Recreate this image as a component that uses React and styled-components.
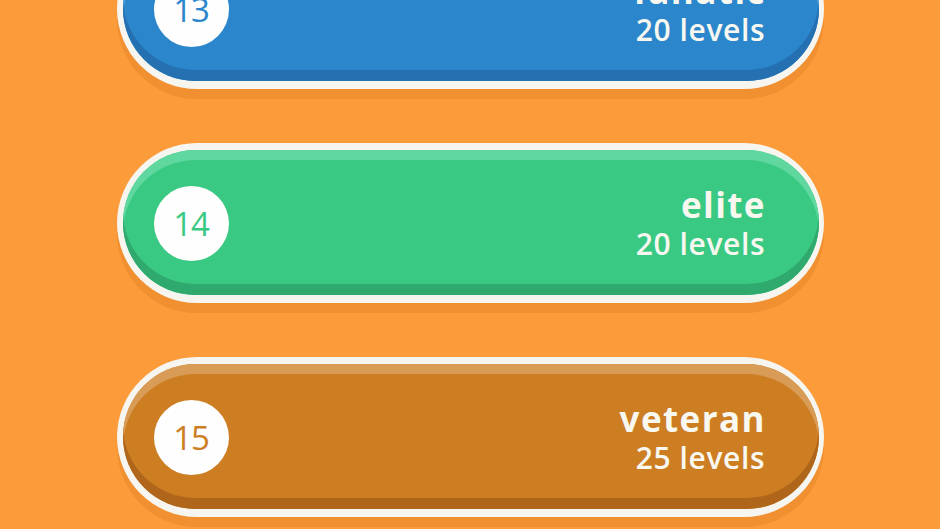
import React from 'react';
import styled, { createGlobalStyle } from 'styled-components';

const GlobalStyle = createGlobalStyle`
  html, body {
    margin: 0;
    padding: 0;
    background: #fc9b3a;
    overflow: hidden;
  }
  body {
    font-family: 'Open Sans', 'Liberation Sans', sans-serif;
  }
`;

const packs = [
  { id: 13, name: 'fanatic', levels: 20, tone: 'blue' },
  { id: 14, name: 'elite', levels: 20, tone: 'green' },
  { id: 15, name: 'veteran', levels: 25, tone: 'amber' }
];

const tones = {
  blue: { main: '#2b86cb', dark: '#2470b0', light: '#4a9ad6' },
  green: { main: '#3ac983', dark: '#2fa96d', light: '#60d79f' },
  amber: { main: '#cd7d22', dark: '#b0661a', light: '#d89c57' }
};

function App() {
  return (
    <>
      <GlobalStyle />
      <Screen>
        <PackList>
          {packs.map((pack) => (
            <PackCard key={pack.id}>
              <PackFace $tone={tones[pack.tone]}>
                <NumberBadge $color={tones[pack.tone].main}>{pack.id}</NumberBadge>
                <PackInfo>
                  <PackName>{pack.name}</PackName>
                  <PackLevels>{pack.levels} levels</PackLevels>
                </PackInfo>
              </PackFace>
            </PackCard>
          ))}
        </PackList>
      </Screen>
    </>
  );
}

export default App;

const Screen = styled.div`
  width: 940px;
  height: 529px;
  background: #fc9b3a;
  overflow: hidden;
  display: flex;
  justify-content: center;
`;

const PackList = styled.div`
  width: 707px;
  margin-top: -71px;
  display: flex;
  flex-direction: column;
  gap: 54px;
`;

// white rim round each pack, with the soft drop under it
const PackCard = styled.div`
  height: 160px;
  box-sizing: border-box;
  padding: 7px 5px 8px 6px;
  border-radius: 80px;
  background: #f7f5ef;
  box-shadow: 0 10px 0 rgba(205, 110, 20, 0.25);
`;

const PackFace = styled.div`
  height: 100%;
  border-radius: 73px;
  background: ${(p) => p.$tone.main};
  box-shadow: inset 0 -11px 0 ${(p) => p.$tone.dark},
    inset 0 10px 0 ${(p) => p.$tone.light};
  display: flex;
  align-items: center;
  justify-content: space-between;
  padding: 2px 54px 0 31px;
  box-sizing: border-box;
`;

const NumberBadge = styled.div`
  width: 75px;
  height: 75px;
  border-radius: 50%;
  background: #fefefe;
  color: ${(p) => p.$color};
  font-size: 33px;
  font-weight: 400;
  display: flex;
  align-items: center;
  justify-content: center;
  letter-spacing: -1px;
`;

const PackInfo = styled.div`
  display: flex;
  flex-direction: column;
  align-items: flex-end;
  color: #f8f8f0;
`;

const PackName = styled.div`
  font-size: 35px;
  font-weight: 700;
  line-height: 40px;
  letter-spacing: 1.4px;
  margin-right: -1.4px;
`;

const PackLevels = styled.div`
  font-size: 30px;
  font-weight: 600;
  line-height: 38px;
  letter-spacing: 0.6px;
  margin-right: -0.6px;
`;
